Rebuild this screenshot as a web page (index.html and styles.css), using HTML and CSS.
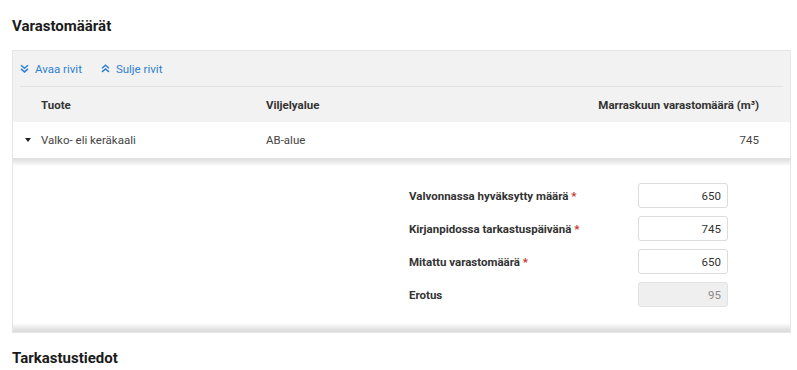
FILE: index.html
```html
<!DOCTYPE html>
<html lang="fi">
<head>
<meta charset="utf-8">
<title>Varastomäärät</title>
<link rel="stylesheet" href="styles.css">
</head>
<body>
<div class="page">
  <h2 class="section-title">Varastomäärät</h2>
  <div class="card">
    <div class="toolbar">
      <a class="tool-link" href="#">
        <svg class="chev" viewBox="0 0 9 9" width="9" height="9"><path d="M1 1.3 L4.5 4.3 L8 1.3 M1 4.9 L4.5 7.9 L8 4.9" fill="none" stroke="currentColor" stroke-width="1.5"/></svg>
        Avaa rivit
      </a>
      <a class="tool-link" href="#">
        <svg class="chev" viewBox="0 0 9 9" width="9" height="9"><path d="M1 4.3 L4.5 1.3 L8 4.3 M1 7.9 L4.5 4.9 L8 7.9" fill="none" stroke="currentColor" stroke-width="1.5"/></svg>
        Sulje rivit
      </a>
    </div>
    <div class="grid-row head">
      <span></span>
      <span>Tuote</span>
      <span>Viljelyalue</span>
      <span class="num">Marraskuun varastomäärä (m³)</span>
    </div>
    <div class="grid-row body-row">
      <span class="caret"></span>
      <span>Valko- eli keräkaali</span>
      <span>AB-alue</span>
      <span class="num">745</span>
    </div>
    <div class="expanded">
      <div class="form">
        <label class="lbl">Valvonnassa hyväksytty määrä <span class="req">*</span></label>
        <input class="field" type="text" value="650">
        <label class="lbl">Kirjanpidossa tarkastuspäivänä <span class="req">*</span></label>
        <input class="field" type="text" value="745">
        <label class="lbl">Mitattu varastomäärä <span class="req">*</span></label>
        <input class="field" type="text" value="650">
        <label class="lbl">Erotus</label>
        <input class="field disabled" type="text" value="95" disabled>
      </div>
    </div>
  </div>
  <h2 class="section-title second">Tarkastustiedot</h2>
</div>
</body>
</html>
```
FILE: styles.css
```css
html, body {
  margin: 0;
  padding: 0;
  background: #fff;
  font-family: Roboto, "Liberation Sans", Arial, sans-serif;
  color: #333;
}

.page {
  padding: 16px 6px 0 12px;
}

.section-title {
  margin: 0;
  font-size: 15px;
  line-height: 20px;
  font-weight: 700;
  color: #1b1b1b;
}

.section-title.second {
  margin-top: 15px;
}

.card {
  margin-top: 14px;
  border: 1px solid #e6e6e6;
  background: #f2f2f2;
}

.toolbar {
  display: flex;
  align-items: center;
  gap: 19px;
  height: 35px;
  margin: 0 7px;
  padding-left: 0;
  border-bottom: 1px solid #e2e2e2;
}

.tool-link {
  display: flex;
  align-items: center;
  gap: 6px;
  color: #2f7fd3;
  text-decoration: none;
  font-size: 11.5px;
}

.chev {
  display: block;
}

.grid-row {
  display: grid;
  grid-template-columns: 16px 225px 1fr auto;
  align-items: center;
  padding: 0 31px 0 12px;
  font-size: 11.5px;
}

.grid-row .num {
  text-align: right;
}

.head {
  height: 35px;
  padding-top: 1px;
  box-sizing: border-box;
  font-weight: 700;
  color: #333;
}

.body-row {
  height: 36px;
  background: #fff;
  color: #444;
}

.caret {
  width: 0;
  height: 0;
  border-left: 3.5px solid transparent;
  border-right: 3.5px solid transparent;
  border-top: 4px solid #222;
}

.expanded {
  background:
    linear-gradient(#dedede, #e6e6e6 3px, rgba(255,255,255,0) 8px) top / 100% 8px no-repeat,
    linear-gradient(rgba(255,255,255,0), #e4e4e4 6px, #dadada) bottom / 100% 9px no-repeat,
    #fff;
  padding: 25px 0 25px 396px;
}

.form {
  display: grid;
  grid-template-columns: 229px 90px;
  row-gap: 8px;
  align-items: center;
}

.lbl {
  font-size: 11.5px;
  font-weight: 700;
  color: #333;
}

.req {
  color: #c8332b;
}

.field {
  box-sizing: border-box;
  width: 90px;
  height: 25px;
  border: 1px solid #dcdcdc;
  border-radius: 3px;
  padding: 0 6px;
  text-align: right;
  font-family: inherit;
  font-size: 11.5px;
  color: #333;
  background: #fff;
  outline: none;
}

.field.disabled {
  background: #efefef;
  color: #8a8a8a;
  border-color: #e2e2e2;
}
```
